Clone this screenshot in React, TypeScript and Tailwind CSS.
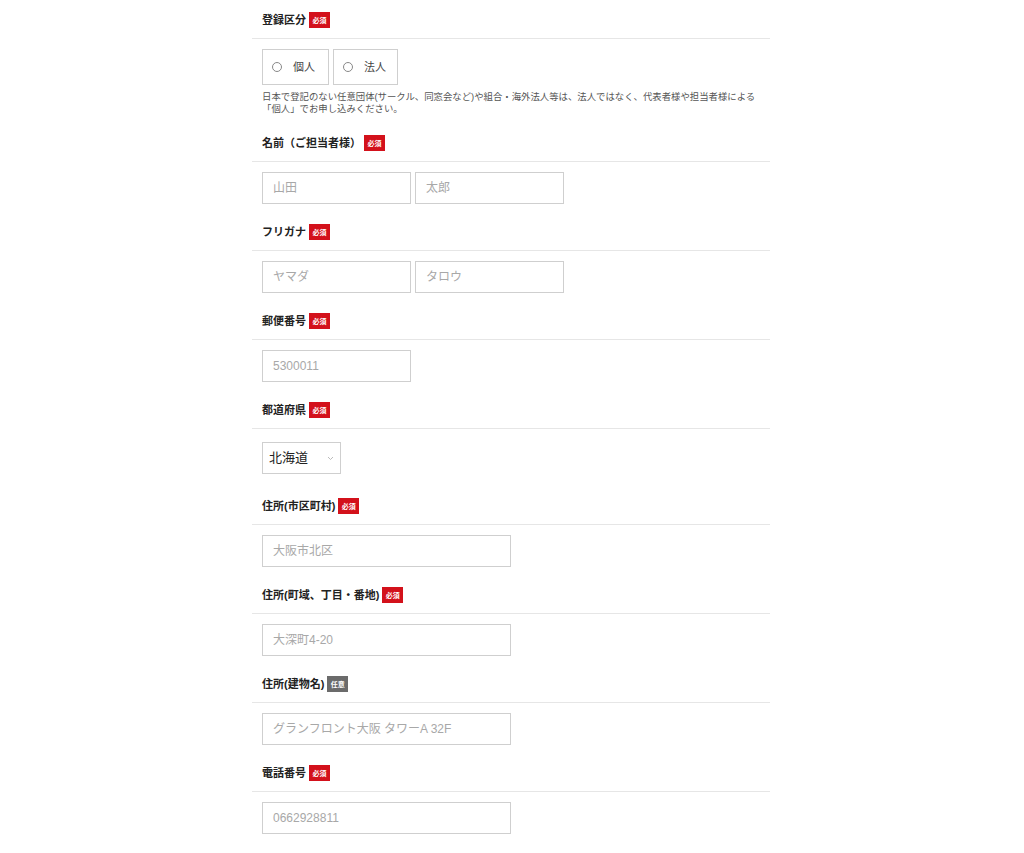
import React from "react";

const font = { fontFamily: '"Liberation Sans", "Noto Sans CJK JP", sans-serif' };

function Badge({ optional }: { optional?: boolean }) {
  return (
    <span
      className={`ml-[3px] inline-flex h-[16px] w-[21px] items-center justify-center text-[7px] font-bold leading-none text-white ${
        optional ? "bg-[#6b6b6b]" : "bg-[#d3111b]"
      }`}
    >
      {optional ? "任意" : "必須"}
    </span>
  );
}

function Label({ text, optional }: { text: string; optional?: boolean }) {
  return (
    <div className="flex h-[16px] items-center pl-[10px] text-[11px] font-bold text-[#222]">
      <span>{text}</span>
      <Badge optional={optional} />
    </div>
  );
}

function Section({
  label,
  optional,
  children,
  contentTop = "pt-[10px]",
  bottom = "pb-[20px]",
}: {
  label: string;
  optional?: boolean;
  children: React.ReactNode;
  contentTop?: string;
  bottom?: string;
}) {
  return (
    <div className={bottom}>
      <div className="border-b border-[#e6e6e6] pb-[10px]">
        <Label text={label} optional={optional} />
      </div>
      <div className={`pl-[10px] ${contentTop}`}>{children}</div>
    </div>
  );
}

function Input({ placeholder, w }: { placeholder: string; w: string }) {
  return (
    <div
      className={`${w} flex h-[32px] items-center border border-[#cfcfcf] bg-white pl-[10px] text-[12px] text-[#a8a8a8]`}
    >
      {placeholder}
    </div>
  );
}

function Radio({ label, w }: { label: string; w: string }) {
  return (
    <div className={`${w} flex h-[36px] items-center border border-[#cfcfcf] pl-[9px] text-[11px] text-[#444]`}>
      <span className="inline-block h-[10px] w-[10px] rounded-full border border-[#888]" />
      <span className="ml-[11px]">{label}</span>
    </div>
  );
}

export default function App() {
  return (
    <div className="min-h-[853px] w-[1024px] bg-white" style={font}>
      <div className="ml-[252px] w-[518px] pt-[12px]">
        <Section label="登録区分" bottom="pb-[20px]">
          <div className="flex gap-[4px]">
            <Radio label="個人" w="w-[67px]" />
            <Radio label="法人" w="w-[65px]" />
          </div>
          <p className="mt-[6px] whitespace-nowrap text-[9.4px] leading-[12px] text-[#555]">
            日本で登記のない任意団体(サークル、同窓会など)や組合・海外法人等は、法人ではなく、代表者様や担当者様による
            <br />
            「個人」でお申し込みください。
          </p>
        </Section>

        <Section label="名前（ご担当者様）">
          <div className="flex gap-[4px]">
            <Input placeholder="山田" w="w-[149px]" />
            <Input placeholder="太郎" w="w-[149px]" />
          </div>
        </Section>

        <Section label="フリガナ">
          <div className="flex gap-[4px]">
            <Input placeholder="ヤマダ" w="w-[149px]" />
            <Input placeholder="タロウ" w="w-[149px]" />
          </div>
        </Section>

        <Section label="郵便番号">
          <Input placeholder="5300011" w="w-[149px]" />
        </Section>

        <Section label="都道府県" contentTop="pt-[13px]" bottom="pb-[24px]">
          <div className="flex h-[32px] w-[79px] items-center justify-between border border-[#cfcfcf] pl-[6px] pr-[6px] text-[13px] text-[#222]">
            <span>北海道</span>
            <svg width="7" height="5" viewBox="0 0 7 5" fill="none">
              <path d="M1 1l2.5 2.5L6 1" stroke="#aaa" strokeWidth="0.8" />
            </svg>
          </div>
        </Section>

        <Section label="住所(市区町村)">
          <Input placeholder="大阪市北区" w="w-[249px]" />
        </Section>

        <Section label="住所(町域、丁目・番地)">
          <Input placeholder="大深町4-20" w="w-[249px]" />
        </Section>

        <Section label="住所(建物名)" optional>
          <Input placeholder="グランフロント大阪 タワーA 32F" w="w-[249px]" />
        </Section>

        <Section label="電話番号">
          <Input placeholder="0662928811" w="w-[249px]" />
        </Section>
      </div>
    </div>
  );
}
